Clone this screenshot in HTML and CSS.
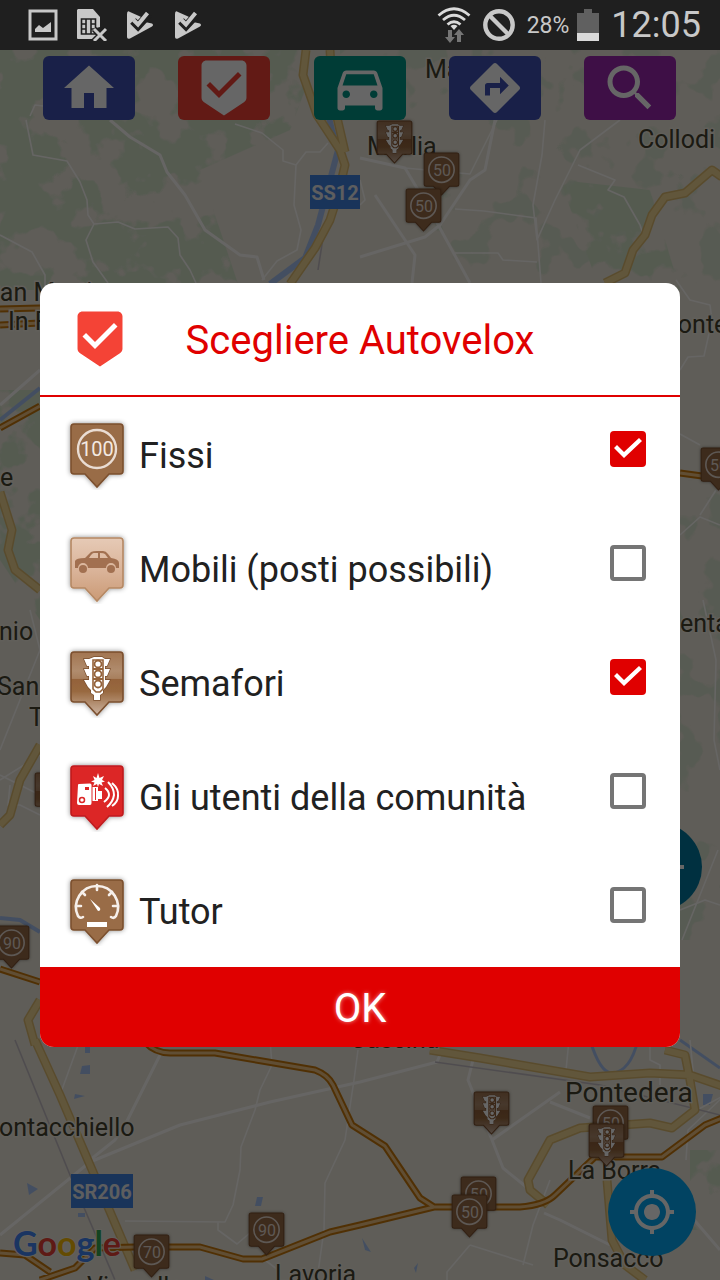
FILE: index.html
```html
<!DOCTYPE html>
<html lang="it">
<head>
<meta charset="utf-8">
<meta name="viewport" content="width=device-width, initial-scale=1">
<title>Scegliere Autovelox</title>
<link rel="stylesheet" href="styles.css">
</head>
<body>
<svg class="defs" aria-hidden="true">
  <defs>
    <linearGradient id="gloss" x1="0" y1="0" x2="0" y2="1">
      <stop offset="0" stop-color="#a27550"/><stop offset=".3" stop-color="#b08c6e"/><stop offset=".42" stop-color="#a8805e"/><stop offset=".43" stop-color="#94623a"/><stop offset=".62" stop-color="#98683f"/><stop offset="1" stop-color="#ccb3a0"/>
    </linearGradient>
    <linearGradient id="sand" x1="0" y1="0" x2="0" y2="1">
      <stop offset="0" stop-color="#e6cab6"/><stop offset=".55" stop-color="#d9b297"/><stop offset="1" stop-color="#cb9a75"/>
    </linearGradient>
    <filter id="halo" x="-20%" y="-20%" width="140%" height="140%">
      <feDropShadow dx="0" dy="0" stdDeviation="2.5" flood-color="#000" flood-opacity=".45"/>
    </filter>
    <path id="pin-shape" d="M9 6H55Q58 6 58 9V53Q58 56 55 56H44L32 69L20 56H9Q6 56 6 53V9Q6 6 9 6Z"/>
    <symbol id="pin-plain" viewBox="0 0 64 72">
      <use href="#pin-shape" fill="#996c46" stroke="#7b4f2e" stroke-width="1.6" filter="url(#halo)"/>
    </symbol>
    <symbol id="pin-sign" viewBox="0 0 64 72">
      <use href="#pin-shape" fill="#996c46" stroke="#7b4f2e" stroke-width="1.6" filter="url(#halo)"/>
      <circle cx="32" cy="31" r="19" fill="none" stroke="#e9dcd3" stroke-width="2.4"/>
    </symbol>
    <symbol id="pin-light" viewBox="0 0 64 72">
      <use href="#pin-shape" fill="url(#gloss)" stroke="#7b4f2e" stroke-width="1.6" filter="url(#halo)"/>
      <g transform="translate(0 1)">
      <path fill="#fff" stroke="#7b4f2e" stroke-width="1.4" paint-order="stroke" d="M29 10h8l3 2h5l-3 7h-2v3h5l-3 7h-2v4h5l-4 7-3 3v3l-3 2v5h-6v-5l-3-2v-3l-3-3-4-7h5v-4h-2l-3-7h5v-3h-2l-3-7h5z"/>
      <path fill="none" stroke="#94623a" stroke-width="1.6" d="M28 13h10v29l-3 3h-4l-3-3z"/>
      <g fill="none" stroke="#94623a" stroke-width="1.8"><path d="M28 22h10M28 32h10"/><circle cx="33" cy="17" r="3.500"/><circle cx="33" cy="27" r="3.500"/><circle cx="33" cy="37" r="3.500"/></g>
      </g>
    </symbol>
    <symbol id="been" viewBox="0 0 24 24"><path d="M19 1H5c-1.100 0-1.990.9-1.990 2v12.930c0 .69.35 1.300.88 1.660L12 23l8.110-5.410c.53-.36.88-.97.88-1.660L21 3c0-1.100-.9-2-2-2zm-9 15l-5-5 1.410-1.410L10 13.170l7.590-7.590L19 7l-9 9z"/></symbol>
    <symbol id="play-check" viewBox="0 0 32 32">
      <path fill="#c8c8c8" d="M3 5Q3 1 6 3L15 7L17 8L21 13L28 14.500Q30 16 28 17.500L6 29.500Q3 30.500 3 28Z"/>
      <path fill="none" stroke="#1f1f1f" stroke-width="8" d="M9 12L14 17L25 5"/>
      <path fill="none" stroke="#c8c8c8" stroke-width="4" d="M9.500 11L14 15.500L23.500 4"/>
    </symbol>
    <filter id="woods" x="0" y="0" width="100%" height="100%" color-interpolation-filters="sRGB">
      <feTurbulence type="fractalNoise" baseFrequency=".022" numOctaves="4" seed="7"/>
      <feColorMatrix values="0 0 0 0 .83  0 0 0 0 .89  0 0 0 0 .79  18 0 0 0 -8"/>
      <feComposite in2="SourceGraphic" operator="in"/>
    </filter>
    <filter id="sparse" x="0" y="0" width="100%" height="100%" color-interpolation-filters="sRGB">
      <feTurbulence type="fractalNoise" baseFrequency=".03" numOctaves="3" seed="3"/>
      <feColorMatrix values="0 0 0 0 .85  0 0 0 0 .89  0 0 0 0 .81  18 0 0 0 -10.500"/>
      <feComposite in2="SourceGraphic" operator="in"/>
    </filter>
  </defs>
</svg>

<header class="status">
  <div class="status-left">
    <svg class="s-icon" viewBox="0 0 32 32"><path fill="none" stroke="#c8c8c8" stroke-width="3" d="M2 2H28V30H2Z"/><path fill="#c8c8c8" d="M7 23V20L11 16L15 19L23 13V23Z"/></svg>
    <svg class="s-icon" viewBox="0 0 32 32"><path fill="#c8c8c8" d="M2 0H17L24 8V18L20 19L24 23L18 30H2Q1 30 1 29V1Z"/><path fill="none" stroke="#1f1f1f" stroke-width="1.600" d="M5.500 10H19.500V25H5.500ZM10 10V25M15 10V25M5.500 15H10M5.500 20H10M15 15H19.500M15 20H19.500"/><path stroke="#1f1f1f" stroke-width="6" d="M18 20L30 32M30 20L18 32"/><path stroke="#c8c8c8" stroke-width="3" d="M18 20L30 32M30 20L18 32"/></svg>
    <svg class="s-icon"><use href="#play-check"/></svg>
    <svg class="s-icon"><use href="#play-check"/></svg>
  </div>
  <div class="status-right">
    <svg class="s-wifi" viewBox="0 0 34 36"><g fill="none" stroke="#dadada" stroke-width="2.800"><path d="M1.500 8.500Q17 -5 32.500 8.500"/><path d="M6 13Q17 3.500 28 13"/><path d="M10.500 17.500Q17 12 23.500 17.500"/></g><path fill="#dadada" d="M13.500 19Q17 16.500 20.500 19L17 23Z"/><path fill="#757575" d="M11 23h4v7h3l-5 6-5-6h3zM20 35v-7h-3l5-6 5 6h-3v7z"/></svg>
    <svg class="s-icon" viewBox="0 0 32 32"><circle cx="16" cy="16" r="13.700" fill="none" stroke="#c8c8c8" stroke-width="4.400"/><path stroke="#c8c8c8" stroke-width="4.400" d="M6.500 6.500L25.500 25.500"/></svg>
    <span class="battery-text">28%</span>
    <svg class="s-battery" viewBox="0 0 22 32"><path fill="#606060" d="M7 0h8v4h7v28H0V4h7z"/><path fill="#dadada" d="M0 24h22v8H0z"/></svg>
    <time class="clock">12:05</time>
  </div>
</header>

<main class="screen">
  <svg class="map" viewBox="0 50 720 1230" preserveAspectRatio="xMidYMid slice" role="img" aria-label="Mappa">
    <rect y="50" width="720" height="1230" fill="#ede8db"/>
    <path fill="#000" filter="url(#woods)" d="M0 50H320L290 130L200 170L240 290H0Z"/>
    <path fill="#000" filter="url(#woods)" d="M0 390H40V620L0 560Z"/>
    <path fill="#000" filter="url(#sparse)" d="M340 50H720V290H450L430 200L500 130L340 100Z"/>
    <path fill="#000" filter="url(#woods)" d="M560 180L650 190L680 290H600Z"/>
    <path fill="#000" filter="url(#woods)" d="M690 1150H720V1230H690Z"/>
    <path fill="#000" filter="url(#sparse)" d="M680 480H720V940H680Z"/>
    <g fill="none" stroke="#a9c4f2" stroke-width="6">
      <path d="M322 90L332 130L338 150L318 225L305 258L270 284" />
      <path d="M0 420L30 396L40 388M0 918L20 920L40 932" stroke-width="4"/>
      <path d="M590 1040Q600 1073 612 1073Q630 1072 638 1040M680 1040L720 1068" stroke-width="3"/>
    </g>
    <g fill="#a9c4f2"><path d="M85 1047h5v6h-5zM82 1066l8-1v9h-10zM75 1094l10 2-11 3zM27 1183l11 6-9 6zM257 1197h6l-2 9h-6zM78 1213h7v4h-7zM703 1094h10l-3 11h-7zM362 1238l9 14-6-2zM205 1276l9 4h-9zM414 1268l4-5-2 10z"/></g>
    <g fill="none" stroke="#fffdf9" stroke-width="1.600" stroke-linejoin="round">
      <path d="M26 120L33 155L67 161L80 182L87 200L88 215L94 224L118 222L135 229L168 227L178 238L180 255L190 270L196 283M94 224L86 240L93 262L108 283M0 235L32 252L45 275V290M30 116L35 105L75 110L110 100"/>
      <path d="M235 124L262 133L283 150V161L296 165L294 205L301 230L297 250L277 261L262 280M296 165L306 152H320L328 143"/>
      <path d="M360 180L365 200L360 205M405 168L470 174L497 120M455 209L484 211L536 218L541 283M545 120L542 155L533 205L537 240L555 200L580 150L620 120M578 165L615 180L608 190L624 197L640 225L645 240M455 253H498L503 260L537 262"/>
      <path d="M676 280L690 300L710 305L712 320L704 356L688 357L680 370M680 434L700 445M680 535L700 517L720 525M700 515L716 490"/>
      <path d="M703 600L716 660L714 740L720 770M680 910L705 900L720 905M682 940L718 850"/>
      <path d="M0 750L40 650L30 610M0 780L40 755M0 775L40 795M10 785L8 805H20L40 815"/>
      <path d="M80 1040L60 1095M270 1040L272 1065L260 1090L255 1110L241 1147L240 1170L233 1205L225 1222L125 1221M218 1222V1230L237 1244L265 1220M265 1260L278 1270"/>
      <path d="M358 1050L354 1080L345 1140L325 1183L324 1230L317 1280M550 1180L533 1225L523 1265M470 1245L447 1272V1280M470 1245L533 1265M569 1040L566 1070M690 1040L697 1110L725 1095L688 1130L686 1160M650 1040V1060L660 1065V1085"/>
    </g>
    <g fill="none" stroke="#fffdf9" stroke-width="3" stroke-linejoin="round">
      <path d="M110 120L130 137L160 155L167 172L185 195L205 230L240 255L257 257L264 280"/>
      <path d="M360 158L405 168L430 210L470 283M360 257L425 237L440 225L470 180L485 170L495 120M375 195L415 255L412 283"/>
      <path d="M160 1055L125 1125L115 1140L90 1160M0 1235L90 1162L180 1125L270 1102L360 1082L437 1062L440 1055M473 1060L468 1080L492 1140L503 1168L530 1190M492 1140L560 1092M550 1102L590 1118M544 1213L560 1220L610 1245M690 1215L720 1250M0 405L40 370"/>
    </g>
    <g fill="none" stroke="#c6bfc5" stroke-width="1.600"><path d="M15 1040L70 1175L115 1280M340 130L345 158M318 270L325 225M435 1062L600 1085L720 1115"/></g>
    <g fill="none" stroke-linejoin="round">
      <path stroke="#dfbc70" stroke-width="9" d="M306 50L303 75L317 115L340 150L345 165L338 195L330 220L315 248L290 284M330 50L333 100L345 152M605 283L625 273L633 250L645 235L652 215L665 197L685 193L712 170L722 177M35 1040L60 1095L90 1165L135 1270M430 1050L480 1058L590 1077L650 1073L690 1075L722 1086M665 1050L685 1055L690 1080L695 1110L672 1128L650 1123L580 1128L550 1140L528 1180L530 1190L548 1205M607 1180L612 1240L625 1265L645 1280M0 492L12 530L8 550L15 570L40 590M40 745L20 780L10 815L0 825M40 1000L28 1020L35 1045"/>
      <path stroke="#f3d795" stroke-width="6" d="M306 50L303 75L317 115L340 150L345 165L338 195L330 220L315 248L290 284M330 50L333 100L345 152M605 283L625 273L633 250L645 235L652 215L665 197L685 193L712 170L722 177M35 1040L60 1095L90 1165L135 1270M430 1050L480 1058L590 1077L650 1073L690 1075L722 1086M665 1050L685 1055L690 1080L695 1110L672 1128L650 1123L580 1128L550 1140L528 1180L530 1190L548 1205M607 1180L612 1240L625 1265L645 1280M0 492L12 530L8 550L15 570L40 590M40 745L20 780L10 815L0 825M40 1000L28 1020L35 1045"/>
      <path stroke="#c9790c" stroke-width="7" d="M145 1042Q155 1053 170 1053H215L315 1070Q328 1075 333 1085L352 1125L385 1146L420 1198L434 1207L520 1207Q545 1205 555 1195L595 1157H662L705 1125L722 1118M0 1253L25 1255L50 1272M40 1280L75 1268L95 1248L135 1247H200L243 1259L262 1259L330 1232L360 1225L434 1207M0 309L40 308M0 325L40 323M0 428L40 406M0 969L40 982M680 473L702 476"/>
      <path stroke="#f0c283" stroke-width="3" d="M145 1042Q155 1053 170 1053H215L315 1070Q328 1075 333 1085L352 1125L385 1146L420 1198L434 1207L520 1207Q545 1205 555 1195L595 1157H662L705 1125L722 1118M0 1253L25 1255L50 1272M40 1280L75 1268L95 1248L135 1247H200L243 1259L262 1259L330 1232L360 1225L434 1207M0 309L40 308M0 325L40 323M0 428L40 406M0 969L40 982M680 473L702 476"/>
    </g>
    <g class="place">
      <text x="425" y="78">Matraia</text><text x="367" y="155">Marlia</text><text x="638" y="148">Collodi</text>
      <text x="-15" y="301">San Martino</text><text x="8" y="330">In Freddana</text><text x="656" y="333">Montecarlo</text>
      <text x="0" y="486">e</text><text x="-1" y="640">nio</text><text x="-3" y="695">San</text><text x="29" y="726">Terme</text>
      <text x="680" y="632">enta</text><text x="350" y="1048">Cascina</text><text x="-1" y="1136">ontacchiello</text>
      <text class="place-big" x="565" y="1102">Pontedera</text><text x="568" y="1179">La Borra</text><text x="553" y="1267">Ponsacco</text>
      <text x="275" y="1283">Lavoria</text><text x="87" y="1295">Vicarello</text>
    </g>
    <g class="shield"><path fill="#4083e0" d="M310 175h50v34h-50zM71 1174h62v34H71z"/><text x="335" y="200">SS12</text><text x="102" y="1199">SR206</text></g>
    <text class="google" x="13" y="1256"><tspan fill="#4285f4">G</tspan><tspan fill="#ea4335">o</tspan><tspan fill="#fbbc05">o</tspan><tspan fill="#4285f4">g</tspan><tspan fill="#34a853">l</tspan><tspan fill="#ea4335">e</tspan></text>
    <g class="speed">
      <use href="#pin-light" x="373" y="117" width="43" height="48"/>
      <use href="#pin-sign" x="420" y="149" width="43" height="48"/><text x="442" y="176">50</text>
      <use href="#pin-sign" x="402" y="185" width="43" height="48"/><text x="424" y="212">50</text>
      <use href="#pin-sign" x="697" y="444" width="43" height="48"/><text x="719" y="471">50</text>
      <use href="#pin-light" x="31" y="769" width="43" height="48"/>
      <use href="#pin-sign" x="-10" y="922" width="43" height="48"/><text x="12" y="949">90</text>
      <use href="#pin-light" x="470" y="1088" width="43" height="48"/>
      <use href="#pin-sign" x="589" y="1102" width="43" height="48"/><text x="611" y="1129">50</text>
      <use href="#pin-light" x="585" y="1120" width="43" height="48"/>
      <use href="#pin-sign" x="457" y="1173" width="43" height="48"/><text x="479" y="1200">50</text>
      <use href="#pin-sign" x="448" y="1191" width="43" height="48"/><text x="470" y="1218">50</text>
      <use href="#pin-sign" x="245" y="1209" width="43" height="48"/><text x="267" y="1236">90</text>
      <use href="#pin-sign" x="130" y="1231" width="43" height="48"/><text x="152" y="1258">70</text>
    </g>
  </svg>

  <nav class="tools" aria-label="Strumenti">
    <button class="tool indigo" aria-label="Home"><svg viewBox="0 0 24 24"><path d="M10 20v-6h4v6h5v-8h3L12 3 2 12h3v8z"/></svg></button>
    <button class="tool red" aria-label="Autovelox"><svg><use href="#been"/></svg></button>
    <button class="tool teal" aria-label="Auto"><svg viewBox="0 0 24 24"><path d="M18.920 6.010C18.720 5.420 18.160 5 17.500 5h-11c-.66 0-1.210.42-1.420 1.010L3 12v8c0 .55.45 1 1 1h1c.55 0 1-.45 1-1v-1h12v1c0 .55.45 1 1 1h1c.55 0 1-.45 1-1v-8l-2.080-5.990zM6.500 16c-.83 0-1.500-.67-1.500-1.500S5.670 13 6.500 13s1.500.67 1.500 1.500S7.330 16 6.500 16zm11 0c-.83 0-1.500-.67-1.500-1.500s.67-1.500 1.500-1.500 1.500.67 1.500 1.500-.67 1.500-1.500 1.500zM5 11l1.500-4.500h11L19 11H5z"/></svg></button>
    <button class="tool indigo" aria-label="Percorso"><svg viewBox="0 0 24 24"><path d="M21.710 11.290l-9-9c-.39-.39-1.020-.39-1.410 0l-9 9c-.39.39-.39 1.020 0 1.410l9 9c.39.39 1.020.39 1.410 0l9-9c.39-.38.39-1.010 0-1.410zM14 14.500V12h-4v3H8v-4c0-.55.45-1 1-1h5V7.500l3.500 3.500-3.500 3.500z"/></svg></button>
    <button class="tool purple" aria-label="Cerca"><svg viewBox="0 0 24 24"><path d="M15.500 14h-.79l-.28-.27C15.410 12.590 16 11.110 16 9.500 16 5.910 13.090 3 9.500 3S3 5.910 3 9.500 5.910 16 9.500 16c1.610 0 3.090-.59 4.230-1.570l.27.28v.79l5 4.990L20.490 19l-4.990-5zm-6 0C7.010 14 5 11.990 5 9.500S7.010 5 9.500 5 14 7.010 14 9.500 11.990 14 9.500 14z"/></svg></button>
  </nav>
  <button class="fab zoom-in" aria-label="Ingrandisci"><svg viewBox="0 0 52 52"><path d="M24 0h4v24h24v4H28v24h-4V28H0v-4h24z"/></svg></button>
  <button class="fab locate" aria-label="Posizione"><svg viewBox="0 0 24 24"><path d="M12 8c-2.210 0-4 1.790-4 4s1.790 4 4 4 4-1.790 4-4-1.790-4-4-4zm8.940 3c-.46-4.170-3.770-7.480-7.940-7.940V1h-2v2.060C6.830 3.520 3.520 6.830 3.060 11H1v2h2.060c.46 4.170 3.770 7.480 7.940 7.940V23h2v-2.060c4.170-.46 7.480-3.770 7.940-7.940H23v-2h-2.060zM12 19c-3.870 0-7-3.130-7-7s3.130-7 7-7 7 3.130 7 7-3.130 7-7 7z"/></svg></button>

  <div class="scrim">
    <form class="dialog" role="dialog" aria-labelledby="dialog-title">
      <header class="dialog-head">
        <svg class="head-icon"><use href="#been"/></svg>
        <h1 class="title" id="dialog-title">Scegliere Autovelox</h1>
      </header>
      <label class="row">
        <svg class="pin" viewBox="0 0 64 72"><use href="#pin-sign" width="64" height="72"/><text class="pin-text" x="32" y="38">100</text></svg>
        <span class="name">Fissi</span><input class="check" type="checkbox" checked>
      </label>
      <label class="row">
        <svg class="pin" viewBox="0 0 64 72"><use href="#pin-shape" fill="url(#sand)" stroke="#b58863" stroke-width="1.600" filter="url(#halo)"/><path fill="#a27050" fill-rule="evenodd" d="M10 29Q11 26 20 26L26 20Q28 19 32 19H38Q41 19 43 22L46 26Q54 27 54 31V36H51A5 5 0 0 0 41 36H23A5 5 0 0 0 13 36H10ZM24 26H33V21H29Q27 21 24 26ZM35 26H43L40 22Q39 21 35 21Z"/><circle cx="18" cy="37" r="4" fill="#a27050"/><circle cx="46" cy="37" r="4" fill="#a27050"/></svg>
        <span class="name">Mobili (posti possibili)</span><input class="check" type="checkbox">
      </label>
      <label class="row">
        <svg class="pin"><use href="#pin-light"/></svg>
        <span class="name">Semafori</span><input class="check" type="checkbox" checked>
      </label>
      <label class="row">
        <svg class="pin" viewBox="0 0 64 72"><use href="#pin-shape" fill="#dc2626" stroke="#bf1c1f" stroke-width="1.600" filter="url(#halo)"/><path fill="#fff" d="M13 25Q13 24 14 24L25 23.500Q26.500 23.500 26.500 25V43Q26.500 45 25 45H14Q12 45 12 43ZM27.500 27H33V31H37V39H33V41H27.500ZM33 13L34.500 18L39 16L37 20L40 21.500L36.500 22.500L38 26L34 24L33 27L32 24L28 26L29.500 22.500L26 21.500L29.500 20L28 16L31.500 18Z"/><path stroke="#dc2626" d="M30.500 28V40"/><circle cx="17" cy="40" r="2.500" fill="none" stroke="#dc2626" stroke-width="1.500"/><path fill="#dc2626" d="M20 27h4v3h-4z"/><path fill="none" stroke="#fff" stroke-width="2" d="M40 28Q44 31 44 35Q44 38 39 42M43 22Q49 28 49 35Q48 42 42 47M47 23Q54 29 53 36Q53 42 47 46"/></svg>
        <span class="name">Gli utenti della comunità</span><input class="check" type="checkbox">
      </label>
      <label class="row">
        <svg class="pin" viewBox="0 0 64 72"><use href="#pin-plain" width="64" height="72"/><g fill="none" stroke="#f6efea" stroke-width="2.600" stroke-linecap="round"><path d="M18 43Q15 45 13 42A21 21 0 1 1 51 42Q49 45 46 43"/><path d="M32 11V16M17 18L20 21M47 18L44 21M12 32H16M48 32H52"/></g><path fill="#fff" d="M25 25L35 34Q36 37 33 37ZM22 48H42V53H22Z"/></svg>
        <span class="name">Tutor</span><input class="check" type="checkbox">
      </label>
      <button class="ok" type="button">OK</button>
    </form>
  </div>
</main>
</body>
</html>
```
FILE: styles.css
```css
* { box-sizing: border-box; }

body {
  margin: 0;
  min-height: 100vh;
  display: flex;
  flex-direction: column;
  font-family: Roboto, "Noto Sans", sans-serif;
  color: #212121;
}

button {
  border: 0;
  padding: 0;
  font-family: inherit;
}

.defs { position: absolute; width: 0; height: 0; }

.status {
  height: 50px;
  padding: 0 19px 0 28px;
  display: flex;
  align-items: center;
  justify-content: space-between;
  background: #1f1f1f;
  color: #c8c8c8;
}
.status-left { display: flex; gap: 16px; }
.status-right { display: flex; align-items: center; gap: 12px; }
.s-icon { width: 32px; height: 32px; }
.s-wifi { width: 34px; height: 36px; }
.s-battery { width: 22px; height: 32px; margin-left: -4px; }
.battery-text { padding-top: 2px; font-size: 23px; line-height: 32px; }
.clock { font-size: 36px; line-height: 48px; }

.screen {
  flex: 1;
  position: relative;
  overflow: hidden;
  display: flex;
  flex-direction: column;
}
.map {
  position: absolute;
  inset: 0;
  width: 100%;
  height: 100%;
}
.place {
  font-size: 25px;
  fill: #45412f;
  stroke: #f2eee2;
  stroke-width: 3px;
  paint-order: stroke;
}
.place-big { font-size: 28px; }
.shield { font-size: 20px; font-weight: 700; text-anchor: middle; }
.shield text { fill: #e8eaee; }
.google {
  font-family: Lato, sans-serif;
  font-size: 34px;
  font-weight: 700;
  stroke: #f4f0e6;
  stroke-width: 2px;
  paint-order: stroke;
}
.speed {
  font-size: 16px;
  text-anchor: middle;
}
.speed text { fill: #e9dcd3; }

.tools {
  position: relative;
  display: flex;
  justify-content: space-between;
  padding: 6px 44px 0 43px;
}
.tool {
  width: 92px;
  height: 64px;
  display: grid;
  place-items: center;
  border-radius: 6px;
  fill: #fff;
}
.tool svg { width: 60px; height: 60px; }
.indigo { background: #3f51b5; }
.red { background: #f44336; }
.teal { background: #009688; }
.purple { background: #9c27b0; }

.fab {
  position: absolute;
  width: 88px;
  height: 88px;
  display: grid;
  place-items: center;
  border-radius: 50%;
  fill: #fff;
}
.locate { right: 24px; bottom: 24px; background: #03a9f4; }
.locate svg { width: 48px; height: 48px; }
.zoom-in { right: 18px; bottom: 369px; background: #0079a0; }
.zoom-in svg { width: 52px; height: 52px; }

.scrim {
  position: absolute;
  inset: 0;
  display: flex;
  align-items: center;
  padding: 0 40px;
  background: rgba(0, 0, 0, .6);
}
.dialog {
  flex: 1;
  overflow: hidden;
  border-radius: 14px;
  background: #fff;
}
.dialog-head {
  height: 114px;
  padding: 0 30px;
  display: grid;
  grid-template-columns: 60px 1fr 60px;
  align-items: center;
  border-bottom: 2px solid #e00000;
}
.head-icon { width: 60px; height: 60px; fill: #f44336; }
.title {
  margin: 0;
  padding-top: 4px;
  font-size: 40px;
  font-weight: 400;
  line-height: 48px;
  text-align: center;
  color: #e00000;
}
.row {
  height: 114px;
  padding: 0 34px 0 25px;
  display: flex;
  align-items: center;
  gap: 10px;
}
.pin { width: 64px; height: 72px; }
.pin-text {
  font-size: 20px;
  text-anchor: middle;
  fill: #f3e9e2;
}
.name {
  flex: 1;
  padding-top: 4px;
  font-size: 36px;
  line-height: 44px;
}
.check {
  appearance: none;
  width: 36px;
  height: 36px;
  margin: 0 0 10px;
  border: 4px solid #757575;
  border-radius: 4px;
}
.check:checked {
  border: 0;
  background: #e00000;
}
.check:checked::before {
  content: "";
  display: block;
  height: 36px;
  background: #fff;
  clip-path: polygon(4px 17px, 7px 14px, 14px 21px, 29px 7px, 32px 10px, 14px 27px);
}
.ok {
  display: block;
  width: 100%;
  height: 80px;
  padding-top: 4px;
  background: #e00000;
  color: #fff;
  font-size: 40px;
  line-height: 48px;
  text-shadow: 0 0 4px rgba(255, 255, 255, .6);
}
```
